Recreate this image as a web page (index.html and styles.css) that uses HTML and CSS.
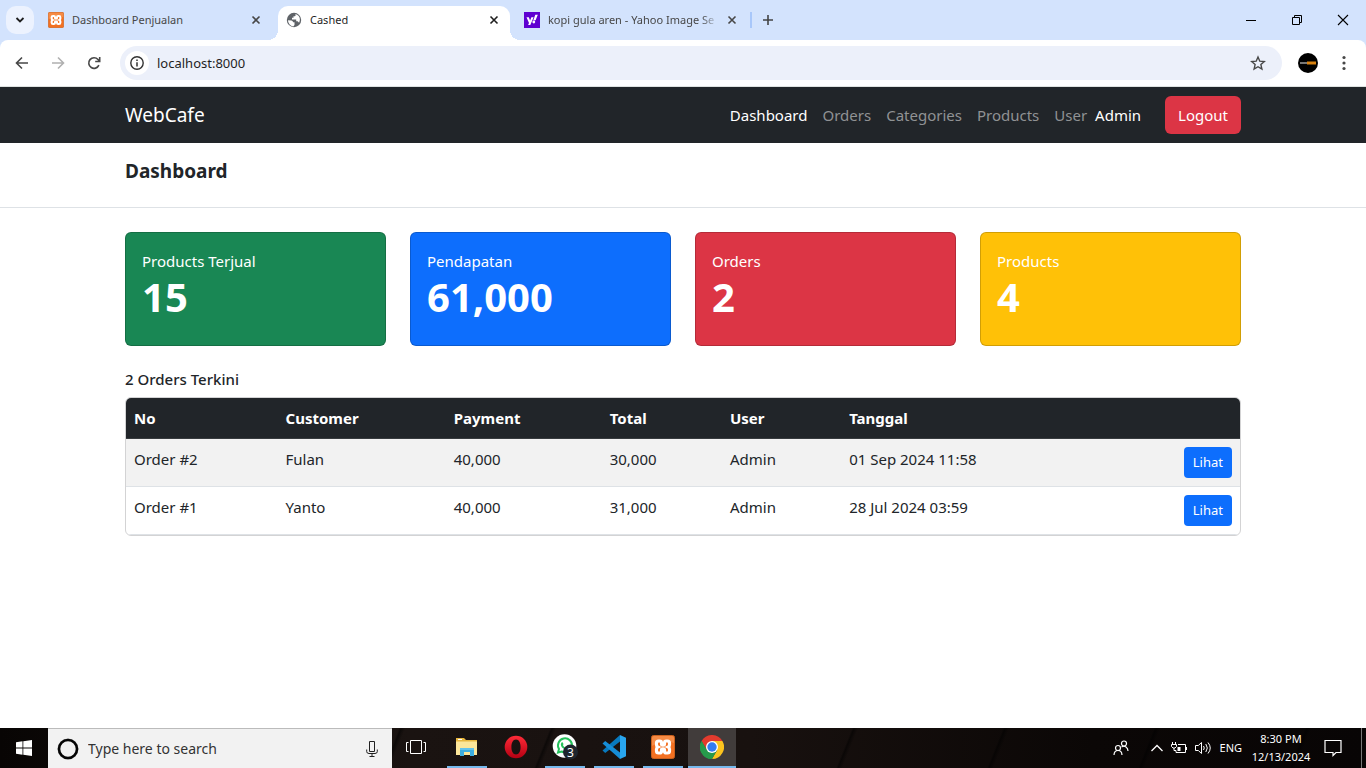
FILE: index.html
```html
<!DOCTYPE html>
<html lang="id">
<head>
<meta charset="utf-8">
<title>Cashed</title>
<link rel="stylesheet" href="styles.css">
</head>
<body>
<svg class="defs" aria-hidden="true">
  <symbol id="xampp" viewBox="0 0 24 24">
    <rect x=".5" y=".5" width="23" height="23" rx="2" fill="#f37021" stroke="#c9601d"/>
    <path d="M1 3a2 2 0 0 1 2-2h18a2 2 0 0 1 2 2v5Q12 4 1 11z" fill="#f68b45"/>
    <path d="M7.500 6h1.200q1.800 0 1.800 1.800v1.200q0 1.100 1.500 1.100t1.500-1.100V7.800Q13.500 6 15.300 6h1.200q2 0 2 2v1.700q0 1.700-1.300 2.300 1.300.6 1.300 2.300V16q0 2-2 2h-1.200q-1.800 0-1.800-1.800V15q0-1.100-1.500-1.100t-1.500 1.100v1.200q0 1.800-1.800 1.800H7.500q-2 0-2-2v-1.700q0-1.700 1.300-2.300-1.300-.6-1.300-2.300V8q0-2 2-2z" fill="none" stroke="#fff" stroke-width="3.200"/>
  </symbol>
  <symbol id="close" viewBox="0 0 12 12"><path d="M2.500 2.500l7 7M9.500 2.500l-7 7" stroke="currentColor" stroke-width="1.600" fill="none"/></symbol>
</svg>

<header class="browser">
  <div class="tabstrip">
    <button class="tab-search" aria-label="Search tabs"><svg width="10" height="10" viewBox="0 0 10 10"><path d="M1.500 3l3.500 3.500L8.500 3" fill="none" stroke="#1f1f1f" stroke-width="1.800"/></svg></button>
    <div class="tabs">
      <div class="tab">
        <svg width="16" height="16"><use href="#xampp"/></svg>
        <span class="tab-title">Dashboard Penjualan</span>
        <button class="tab-close" aria-label="Close tab"><svg width="12" height="12"><use href="#close"/></svg></button>
      </div>
      <div class="tab tab-active">
        <svg width="16" height="16" viewBox="0 0 16 16"><circle cx="8" cy="8" r="7.200" fill="#5f6368"/><path d="M2 8.200l3.500.2q1.700.3 1.500 1.900h1.500v2.800l-1.200 1.300A6 6 0 0 1 2 8.200zM9.300 2q.9 1.300-.3 2.300H7.500v1.500H6v1.600h4.200v1.800h1.400l1.500 1.600q1.800-3.800-.4-6.700Q11.300 2.400 9.300 2z" fill="#fff"/></svg>
        <span class="tab-title">Cashed</span>
        <button class="tab-close" aria-label="Close tab"><svg width="12" height="12"><use href="#close"/></svg></button>
      </div>
      <div class="tab">
        <svg width="16" height="16" viewBox="0 0 16 16"><path d="M0 0h16v16H0z" fill="#5f01d1"/><path d="M2.500 5.200h2.300l1.300 3.200 1.300-3.200h2.200L6.300 13H4.100l.9-2.100zM11.300 2.800h2.500L11.600 8.200H9.300z" fill="#fff"/><circle cx="9.800" cy="10" r="1.400" fill="#fff"/></svg>
        <span class="tab-title tab-fade">kopi gula aren - Yahoo Image Se</span>
        <button class="tab-close" aria-label="Close tab"><svg width="12" height="12"><use href="#close"/></svg></button>
      </div>
    </div>
    <span class="tab-divider"></span>
    <button class="new-tab" aria-label="New tab"><svg width="12" height="12" viewBox="0 0 12 12"><path d="M6 1v10M1 6h10" stroke="#444" stroke-width="1.600"/></svg></button>
    <div class="window-controls">
      <button aria-label="Minimize"><svg width="12" height="12" viewBox="0 0 12 12"><path d="M1 6.500h10" stroke="#000"/></svg></button>
      <button aria-label="Restore"><svg width="12" height="12" viewBox="0 0 12 12"><path d="M1.500 3.500h7v7h-7zM3.500 3.500v-2h7v7h-2" fill="none" stroke="#000"/></svg></button>
      <button aria-label="Close"><svg width="12" height="12" viewBox="0 0 12 12"><path d="M1 1l10 10M11 1L1 11" stroke="#000" stroke-width="1.100"/></svg></button>
    </div>
  </div>
  <div class="toolbar">
    <button aria-label="Back"><svg width="16" height="16" viewBox="0 0 16 16"><path d="M14 8H3M8 2.500L2.500 8 8 13.500" fill="none" stroke="#474747" stroke-width="1.600"/></svg></button>
    <button aria-label="Forward"><svg width="16" height="16" viewBox="0 0 16 16"><path d="M2 8h11M8 2.500L13.500 8 8 13.500" fill="none" stroke="#b0b0b0" stroke-width="1.600"/></svg></button>
    <button aria-label="Reload"><svg width="16" height="16" viewBox="0 0 16 16"><path d="M12.900 10.200A5.300 5.300 0 1 1 12 4.500l1.500 1.700M13.700 2v4.500H9.200" fill="none" stroke="#474747" stroke-width="1.600"/></svg></button>
    <div class="address">
      <button class="site-info" aria-label="Site information"><svg width="16" height="16" viewBox="0 0 16 16"><circle cx="8" cy="8" r="6.200" fill="none" stroke="#333" stroke-width="1.400"/><path d="M8 7.200V11.500M8 4.500v1.500" stroke="#333" stroke-width="1.500"/></svg></button>
      <input class="url" type="text" aria-label="Address" value="localhost:8000">
      <button class="star" aria-label="Bookmark"><svg width="18" height="18" viewBox="0 0 18 18"><path d="M9 3l1.800 4.200 4.500.4-3.400 3 1 4.400L9 12.700 5.100 15l1-4.400-3.400-3 4.500-.4z" fill="none" stroke="#474747" stroke-width="1.400"/></svg></button>
    </div>
    <button class="profile" aria-label="Profile"><svg width="20" height="20" viewBox="0 0 20 20"><circle cx="10" cy="10" r="10" fill="#000"/><path d="M2 10h7" stroke="#777" stroke-width="2"/><path d="M9 10h9" stroke="#d9820f" stroke-width="3"/></svg></button>
    <button class="more" aria-label="Menu"><svg width="4" height="16" viewBox="0 0 4 16"><g fill="#474747"><circle cx="2" cy="2.500" r="1.600"/><circle cx="2" cy="8" r="1.600"/><circle cx="2" cy="13.500" r="1.600"/></g></svg></button>
  </div>
</header>

<main class="page">
  <nav class="navbar">
    <div class="container navbar-inner">
      <a class="brand" href="#">WebCafe</a>
      <div class="nav-links">
        <a class="active" href="#">Dashboard</a>
        <a href="#">Orders</a>
        <a href="#">Categories</a>
        <a href="#">Products</a>
        <a href="#">User</a>
      </div>
      <span class="nav-user">Admin</span>
      <button class="btn btn-danger">Logout</button>
    </div>
  </nav>
  <div class="page-head"><div class="container"><h1>Dashboard</h1></div></div>
  <div class="container content">
    <section class="stats">
      <div class="stat success"><p>Products Terjual</p><strong>15</strong></div>
      <div class="stat primary"><p>Pendapatan</p><strong>61,000</strong></div>
      <div class="stat danger"><p>Orders</p><strong>2</strong></div>
      <div class="stat warning"><p>Products</p><strong>4</strong></div>
    </section>
    <section>
      <h2>2 Orders Terkini</h2>
      <div class="table-card">
        <table>
          <colgroup><col class="c-no"><col class="c-customer"><col class="c-payment"><col class="c-total"><col class="c-user"><col><col class="c-action"></colgroup>
          <thead><tr><th>No</th><th>Customer</th><th>Payment</th><th>Total</th><th>User</th><th>Tanggal</th><th></th></tr></thead>
          <tbody>
            <tr><td>Order #2</td><td>Fulan</td><td>40,000</td><td>30,000</td><td>Admin</td><td>01 Sep 2024 11:58</td><td class="action"><a class="btn-sm" href="#">Lihat</a></td></tr>
            <tr><td>Order #1</td><td>Yanto</td><td>40,000</td><td>31,000</td><td>Admin</td><td>28 Jul 2024 03:59</td><td class="action"><a class="btn-sm" href="#">Lihat</a></td></tr>
          </tbody>
        </table>
      </div>
    </section>
  </div>
</main>

<footer class="taskbar">
  <button class="start" aria-label="Start"><svg width="16" height="16" viewBox="0 0 16 16"><path d="M0 2.200L6.500 1.300v6.200H0zM7.300 1.200L16 0v7.500H7.300zM0 8.400h6.500v6.300L0 13.800zM7.300 8.400H16V16l-8.700-1.200z" fill="#fff"/></svg></button>
  <label class="search">
    <svg width="22" height="22" viewBox="0 0 22 22"><circle cx="11" cy="11" r="9.500" fill="none" stroke="#999" stroke-width="2"/><circle cx="11" cy="11" r="9" fill="none" stroke="#050505" stroke-width="2.600"/></svg>
    <input type="text" placeholder="Type here to search" aria-label="Type here to search">
    <svg width="12" height="16" viewBox="0 0 12 16"><path d="M3.500.5h5v10h-5zM.7 8.500v2q0 2 2.300 2h6q2.300 0 2.300-2v-2M6 12.500v3M3.500 15.500h5" fill="none" stroke="#222"/></svg>
  </label>
  <button class="app taskview" aria-label="Task view"><svg width="20" height="16" viewBox="0 0 20 16"><path d="M4.500 1.500h11v13h-11zM2.500 3.500h-2v9h2M17.500 3.500h2v9h-2" fill="none" stroke="#fff"/></svg></button>
  <div class="apps">
    <button class="app open" aria-label="File Explorer"><svg width="24" height="24" viewBox="0 0 24 24"><path d="M1 3h8l2 2h11v15H1z" fill="#e7b63e"/><path d="M1 6.500h21V20H1z" fill="#fce69a"/><path d="M3 4h4v1H3z" fill="#fff"/><path d="M5 13h14v8h-4v-4H9v4H5z" fill="#3daee0"/><path d="M5 13h14v2H5z" fill="#63c3ec"/></svg></button>
    <button class="app" aria-label="Opera"><svg width="24" height="24" viewBox="0 0 24 24"><defs><linearGradient id="op" x2="0" y2="1"><stop stop-color="#ff2b38"/><stop offset="1" stop-color="#b40012"/></linearGradient></defs><path d="M12 .7a11.200 11.200 0 1 0 0 22.600A11.200 11.200 0 1 0 12 .7zm0 3.800c3 0 4.600 3.200 4.600 7.500S15 19.500 12 19.500 7.400 16.300 7.400 12 9 4.500 12 4.500z" fill="url(#op)" fill-rule="evenodd"/></svg></button>
    <button class="app open" aria-label="WhatsApp"><svg width="26" height="26" viewBox="0 0 26 26"><circle cx="12.500" cy="12" r="11.800" fill="#fff"/><path d="M6 18.500l1-3.500a7 7 0 1 1 2.600 2.500z" fill="none" stroke="#25c15b" stroke-width="2"/><path d="M9.500 8.500q1-1 1.700.8l.2 1q-.9.9.2 1.900 1.600 1.900 2.300 1.100.8-.9 2.600.5-1 2.600-3.800 1.400-3.800-1.700-3.900-5z" fill="#25c15b"/><circle cx="18.500" cy="18" r="7.500" fill="#1e252d"/><text x="15" y="23" class="badge">3</text></svg></button>
    <button class="app open" aria-label="Visual Studio Code"><svg width="24" height="24" viewBox="0 0 24 24"><path d="M18 0l6 2.800v18.400L18 24z" fill="#29a6ef"/><path d="M18 0v6.500L3.200 18 .5 15.600z" fill="#0879be"/><path d="M18 24v-6.500L3.200 6 .5 8.400z" fill="#168dd7"/></svg></button>
    <button class="app open" aria-label="XAMPP"><svg width="24" height="24"><use href="#xampp"/></svg></button>
    <button class="app open current" aria-label="Google Chrome"><svg width="24" height="24" viewBox="0 0 24 24"><path d="M12 12L1.600 6A12 12 0 0 1 22.400 6z" fill="#e33b2e"/><path d="M12 12V6h10.400A12 12 0 0 1 12 24l5.200-9z" fill="#fcc31e"/><path d="M12 12l5.200 3L12 24A12 12 0 0 1 1.600 6l5.200 9z" fill="#269a4b"/><path d="M1.600 6l5.200 9L12 12V6z" fill="#e33b2e"/><path d="M1.600 6l5.200 9 5.200 3 0 6A12 12 0 0 1 1.600 6z" fill="#269a4b"/><circle cx="12" cy="12" r="6" fill="#fff"/><circle cx="12" cy="12" r="4.700" fill="#347cf0"/></svg></button>
  </div>
  <div class="tray">
    <button class="people" aria-label="People"><svg width="16" height="16" viewBox="0 0 16 16"><g fill="none" stroke="#fff" stroke-width="1.200"><circle cx="5" cy="8" r="2.500"/><path d="M1 15q.2-4.500 4-4.500T9 15"/><circle cx="11" cy="3.500" r="2.500"/><path d="M8.500 7Q11 5.500 13 7t2 4"/></g></svg></button>
    <button aria-label="Hidden icons"><svg width="12" height="8" viewBox="0 0 12 8"><path d="M.5 7L6 1.500 11.500 7" fill="none" stroke="#fff" stroke-width="1.300"/></svg></button>
    <button aria-label="Battery"><svg width="16" height="12" viewBox="0 0 16 12"><path d="M7 2.500h7.500v8H5v-2M15.500 5v3M1.500 0v2.500M4.500 0v2.500M.5 2.500h5v2L4 6H2L.5 4.500zM3 6v2.500h2" fill="none" stroke="#fff"/><path d="M6.500 5h3v4h-3z" fill="#fff"/></svg></button>
    <button aria-label="Volume"><svg width="17" height="14" viewBox="0 0 17 14"><path d="M.5 4.500h2.800l3.200-3v11l-3.200-3H.5zM8.500 5q1.500 2 0 4M10.800 3q3 4 0 8M13 1.500q4.500 5.500 0 11" fill="none" stroke="#fff"/></svg></button>
    <span class="lang">ENG</span>
    <time class="clock"><span>8:30 PM</span><span>12/13/2024</span></time>
    <button class="notes" aria-label="Notifications"><svg width="18" height="18" viewBox="0 0 18 18"><path d="M1 1.500h16v12h-5l-3 3v-3H1z" fill="none" stroke="#fff" stroke-width="1.200"/></svg></button>
    <span class="peek"></span>
  </div>
</footer>
</body>
</html>
```
FILE: styles.css
```css
* { box-sizing: border-box; }

body {
  margin: 0;
  height: 100vh;
  display: flex;
  flex-direction: column;
  font: 15px/24px "Noto Sans", "Open Sans", sans-serif;
  color: #212529;
  background: #fff;
}

button { border: 0; padding: 0; background: none; color: inherit; font: inherit; display: flex; align-items: center; justify-content: center; }
input { border: 0; padding: 0; background: none; font: inherit; min-width: 0; outline: 0; }
a { color: inherit; text-decoration: none; }
h1, h2, p { margin: 0; }
svg { display: block; flex: none; }
.defs { position: absolute; width: 0; height: 0; }

/* Browser chrome */
.browser { background: #d3e3fd; font-size: 11px; line-height: 16px; border-bottom: 1px solid #dfe3e1; }
.tabstrip { display: flex; align-items: center; height: 40px; padding-left: 6px; }
.tab-search { width: 28px; height: 28px; border-radius: 10px; background: #ecf2fe; }
.tabs { display: flex; gap: 6px; margin-left: 6px; align-self: flex-end; }
.tab { position: relative; display: flex; align-items: center; width: 232px; height: 34px; padding: 0 10px 6px 8px; color: #474747; }
.tab-title { flex: 1; min-width: 0; margin: 0 4px 0 8px; white-space: nowrap; overflow: hidden; }
.tab-fade { mask-image: linear-gradient(to right, #000 88%, transparent 98%); }
.tab-close { width: 12px; height: 12px; }
.tab-active { background: #fff; color: #1f1f1f; border-radius: 10px 10px 0 0; }
.tab-active::before, .tab-active::after { content: ""; position: absolute; bottom: 0; width: 10px; height: 10px; }
.tab-active::before { right: 100%; background: radial-gradient(circle at 0 0, transparent 10px, #fff 10px); }
.tab-active::after { left: 100%; background: radial-gradient(circle at 100% 0, transparent 10px, #fff 10px); }
.tab-divider { width: 2px; height: 16px; margin-left: 2px; background: #a8c7fa; }
.new-tab { width: 32px; height: 28px; }
.window-controls { display: flex; margin-left: auto; }
.window-controls button { width: 46px; height: 40px; }

.toolbar { display: flex; align-items: center; height: 46px; padding: 0 14px; background: #fff; border-radius: 8px 8px 0 0; }
.toolbar > button { width: 16px; height: 34px; margin-right: 20px; }
.address { flex: 1; display: flex; align-items: center; height: 34px; margin-left: -2px; padding: 0 15px 0 5px; border-radius: 17px; background: #ecf0fa; }
.site-info { width: 24px; height: 24px; border-radius: 50%; background: #fff; }
.url { flex: 1; margin-left: 8px; font-size: 13px; color: #1f1f1f; }
.toolbar > .profile { width: 20px; margin: 0 24px 0 16px; }
.toolbar > .more { width: 4px; margin: 0 6px 0 0; }

/* Page */
.page { flex: 1; min-height: 0; overflow: hidden; }
.container { width: 100%; max-width: 1140px; margin: 0 auto; padding: 0 12px; }
.navbar { background: #212529; color: #fff; }
.navbar-inner { display: flex; align-items: center; height: 56px; }
.brand { font-size: 19px; line-height: 28px; margin-right: auto; }
.nav-links { display: flex; gap: 15px; color: #909294; }
.nav-links .active { color: #fff; }
.nav-user { margin: 0 24px 0 8px; }
.btn { height: 38px; padding: 0 13px; border-radius: 6px; }
.btn-danger { background: #dc3545; color: #fff; }

.page-head { padding: 16px 0 24px; border-bottom: 1px solid #dee2e6; }
.page-head h1 { font-size: 19px; line-height: 24px; font-weight: 700; }
.content { padding-top: 24px; }
.stats { display: grid; grid-template-columns: repeat(4, 1fr); gap: 24px; margin-bottom: 24px; }
.stat { padding: 16px 16px 24px; border: 1px solid rgba(0, 0, 0, .18); border-radius: 6px; color: #fff; }
.stat strong { display: block; font-size: 40px; line-height: 48px; font-weight: 700; }
.success { background-color: #198754; }
.primary { background-color: #0d6efd; }
.danger { background-color: #dc3545; }
.warning { background-color: #ffc107; }

h2 { margin-bottom: 8px; font-size: 15px; line-height: 19px; font-weight: 500; }
.table-card { border: 1px solid #d3d3d4; border-radius: 6px; overflow: hidden; }
table { width: 100%; table-layout: fixed; border-collapse: separate; border-spacing: 0; }
th, td { padding: 8px; text-align: left; vertical-align: top; border-bottom: 1px solid #dee2e6; }
th { background: #212529; color: #fff; border-color: #373b3e; font-weight: 700; }
tbody tr:nth-child(odd) { background: #f2f2f2; }
.c-no { width: 13.6%; }
.c-customer { width: 15.1%; }
.c-payment { width: 14%; }
.c-total { width: 10.8%; }
.c-user { width: 10.7%; }
.c-action { width: 80px; }
.action { text-align: right; }
.btn-sm { display: block; width: max-content; margin-left: auto; padding: 5px 9px; border-radius: 4px; background: #0d6efd; color: #fff; font-size: 13px; line-height: 21px; }

/* Taskbar */
.taskbar {
  display: flex;
  height: 40px;
  color: #fff;
  background: repeating-linear-gradient(112deg, transparent 0 90px, rgba(0, 0, 0, .5) 92px, transparent 96px 140px),
    linear-gradient(to right, #080504, #1a1311 30%, #18110f 55%, #0b0706 80%, #080505);
}
.start { width: 48px; }
.search { display: flex; align-items: center; width: 344px; padding: 0 14px 0 9px; background: #f2f2f2; border-top: 1px solid #bbb; }
.search input { flex: 1; margin-left: 9px; font-size: 14px; }
.search input::placeholder { color: #333; opacity: 1; }
.app { width: 48px; height: 40px; border-bottom: 2px solid transparent; }
.apps { display: flex; gap: 1px; margin-left: 3px; }
.open { background: linear-gradient(#76b9ed, #76b9ed) bottom / 40px 2px no-repeat border-box; }
.current { background: #413c3b; border-color: #76b9ed; }
.badge { font: 12px "Noto Sans", sans-serif; fill: #fff; }
.tray { display: flex; align-items: center; gap: 8px; margin-left: auto; font-size: 11px; line-height: 18px; }
.people { margin-right: 14px; }
.clock { display: flex; flex-direction: column; align-items: center; width: 62px; }
.notes { width: 26px; }
.peek { width: 5px; height: 40px; margin-left: 7px; border-left: 1px solid #777; }
```
